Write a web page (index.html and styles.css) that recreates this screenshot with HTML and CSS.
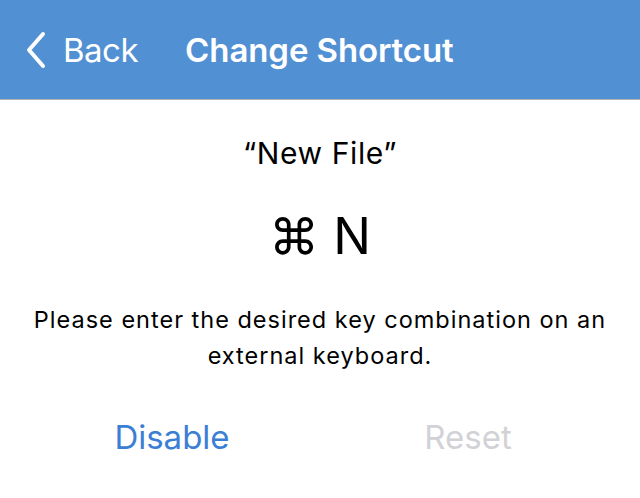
FILE: index.html
```html
<!DOCTYPE html>
<html>
<head>
<meta charset="utf-8">
<link rel="stylesheet" href="styles.css">
</head>
<body>
<header class="navbar">
  <a class="back">
    <svg class="chevron" width="22" height="38" viewBox="0 0 22 38"><path d="M18 3 L4 19 L18 35" fill="none" stroke="#fff" stroke-width="4" stroke-linecap="round" stroke-linejoin="round"/></svg>
    <span>Back</span>
  </a>
  <h1 class="title">Change Shortcut</h1>
</header>
<main class="content">
  <p class="command">“New File”</p>
  <p class="combo">⌘ N</p>
  <p class="hint">Please enter the desired key combination on an external keyboard.</p>
  <div class="actions">
    <button class="action primary">Disable</button>
    <button class="action disabled">Reset</button>
  </div>
</main>
</body>
</html>
```
FILE: styles.css
```css
html, body {
  margin: 0;
  padding: 0;
  background: #fff;
  font-family: Inter, "Noto Sans", sans-serif;
}
.navbar {
  height: 99px;
  background: #5290d4;
  border-bottom: 1px solid #b5b5b5;
  display: flex;
  align-items: center;
  padding-left: 25px;
  color: #fff;
}
.back {
  display: flex;
  align-items: center;
  gap: 16px;
  font-size: 33px;
  letter-spacing: -0.5px;
}
.chevron {
  display: block;
}
.title {
  margin: 0 0 0 47px;
  font-size: 33px;
  font-weight: 600;
  letter-spacing: -0.1px;
}
.content {
  display: flex;
  flex-direction: column;
  align-items: center;
  text-align: center;
}
.command {
  margin: 34px 0 0;
  font-size: 30px;
  letter-spacing: 0.6px;
  line-height: 38px;
  color: #000;
}
.combo {
  margin: 34px 0 0;
  font-size: 50px;
  line-height: 60px;
  color: #000;
}
.hint {
  margin: 36px 16px 0;
  font-size: 23.5px;
  letter-spacing: 1px;
  line-height: 36px;
  color: #000;
}
.actions {
  align-self: stretch;
  display: grid;
  grid-template-columns: 1fr 1fr;
  padding: 0 24px;
  margin-top: 43px;
}
.action {
  border: 0;
  background: none;
  font-family: inherit;
  font-size: 33px;
  padding: 0;
  line-height: 40px;
}
.primary { color: #3b7ed4; }
.disabled { color: #d2d2d6; }
```
